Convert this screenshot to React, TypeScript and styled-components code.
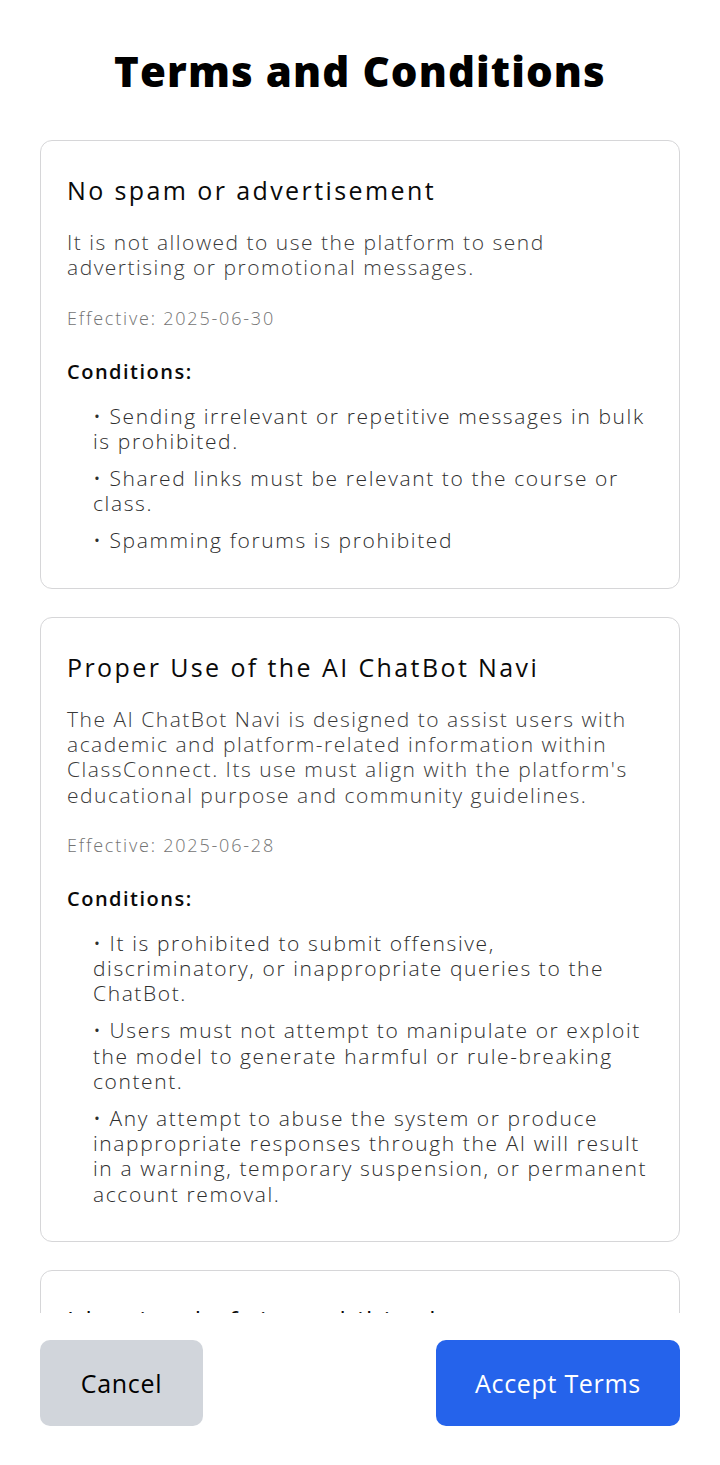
import React from 'react';
import styled, { createGlobalStyle } from 'styled-components';

const GlobalStyle = createGlobalStyle`
	html, body {
		margin: 0;
		padding: 0;
		background: #ffffff;
	}
	body {
		font-family: 'Open Sans', 'Noto Sans', sans-serif;
		color: #111111;
	}
	* {
		box-sizing: border-box;
	}
`;

interface Term {
	title: string;
	description: string;
	effective: string;
	conditions: string[];
}

const terms: Term[] = [
	{
		title: 'No spam or advertisement',
		description: 'It is not allowed to use the platform to send advertising or promotional messages.',
		effective: '2025-06-30',
		conditions: [
			'Sending irrelevant or repetitive messages in bulk is prohibited.',
			'Shared links must be relevant to the course or class.',
			'Spamming forums is prohibited',
		],
	},
	{
		title: 'Proper Use of the AI ChatBot Navi',
		description: "The AI ChatBot Navi is designed to assist users with academic and platform-related information within ClassConnect. Its use must align with the platform's educational purpose and community guidelines.",
		effective: '2025-06-28',
		conditions: [
			'It is prohibited to submit offensive, discriminatory, or inappropriate queries to the ChatBot.',
			'Users must not attempt to manipulate or exploit the model to generate harmful or rule-breaking content.',
			'Any attempt to abuse the system or produce inappropriate responses through the AI will result in a warning, temporary suspension, or permanent account removal.',
		],
	},
	{
		title: 'Identity theft is prohibited',
		description: 'Impersonating other students, teachers or staff members is not allowed on the platform.',
		effective: '2025-06-25',
		conditions: [
			'Creating accounts with false information is prohibited.',
			'Using the name or photo of another person is prohibited.',
		],
	},
];

const Screen = styled.div`
	display: flex;
	flex-direction: column;
	height: 100vh;
	padding: 0 40px;
`;

const Heading = styled.h1`
	margin: 0;
	padding: 44px 0 42px;
	text-align: center;
	font-family: 'Open Sans', sans-serif;
	font-weight: 800;
	font-size: 42px;
	line-height: 54px;
	letter-spacing: 1.1px;
	color: #000000;
`;

const TermList = styled.div`
	flex: 1;
	min-height: 0;
	overflow-y: auto;
	display: flex;
	flex-direction: column;
	gap: 28px;
	scrollbar-width: none;
	&::-webkit-scrollbar {
		display: none;
	}
`;

const Card = styled.section`
	flex-shrink: 0;
	border: 1.5px solid #d6d6d8;
	border-radius: 12px;
	padding: 32px 26px 34px;
	background: #ffffff;
`;

const CardTitle = styled.h2`
	margin: 0 0 23px;
	font-weight: 400;
	font-size: 25px;
	line-height: 34px;
	letter-spacing: 2.4px;
	color: #0a0a0a;
`;

const Description = styled.p`
	margin: 0 0 25px;
	font-weight: 300;
	font-size: 21px;
	line-height: 25.3px;
	letter-spacing: 1.5px;
	color: #3a3a3a;
`;

const Effective = styled.div`
	margin: 0 0 29px;
	font-weight: 300;
	font-size: 18px;
	line-height: 24px;
	letter-spacing: 1.8px;
	color: #737373;
`;

const ConditionsLabel = styled.h3`
	margin: 0 0 19px;
	font-weight: 600;
	font-size: 20px;
	line-height: 26px;
	letter-spacing: 1.5px;
	color: #0a0a0a;
`;

const ConditionList = styled.ul`
	list-style: none;
	margin: 0;
	padding: 0 0 0 26px;
	display: flex;
	flex-direction: column;
	gap: 12px;
`;

const Condition = styled.li`
	font-weight: 300;
	font-size: 21px;
	line-height: 25.2px;
	letter-spacing: 1.6px;
	color: #2e2e2e;
`;

const Footer = styled.div`
	display: flex;
	justify-content: space-between;
	align-items: center;
	padding: 27px 0 39px;
`;

const ActionButton = styled.button<{ $primary?: boolean }>`
	height: 86px;
	padding: 0 20px;
	min-width: ${props => props.$primary ? '244px' : '163px'};
	border: none;
	border-radius: 10px;
	background: ${props => props.$primary ? '#2563eb' : '#d1d5db'};
	color: ${props => props.$primary ? '#ffffff' : '#000000'};
	font-family: 'Open Sans', sans-serif;
	font-weight: 500;
	font-size: 25px;
	letter-spacing: 0.7px;
	cursor: pointer;
`;

const App = () => {
	return (
		<>
			<GlobalStyle />
			<Screen>
				<Heading>Terms and Conditions</Heading>
				<TermList>
					{terms.map((term, index) => (
						<Card key={index}>
							<CardTitle>{term.title}</CardTitle>
							<Description>{term.description}</Description>
							<Effective>Effective: {term.effective}</Effective>
							<ConditionsLabel>Conditions:</ConditionsLabel>
							<ConditionList>
								{term.conditions.map((condition, i) => (
									<Condition key={i}>• {condition}</Condition>
								))}
							</ConditionList>
						</Card>
					))}
				</TermList>
				<Footer>
					<ActionButton>Cancel</ActionButton>
					<ActionButton $primary>Accept Terms</ActionButton>
				</Footer>
			</Screen>
		</>
	);
}

export default App;
